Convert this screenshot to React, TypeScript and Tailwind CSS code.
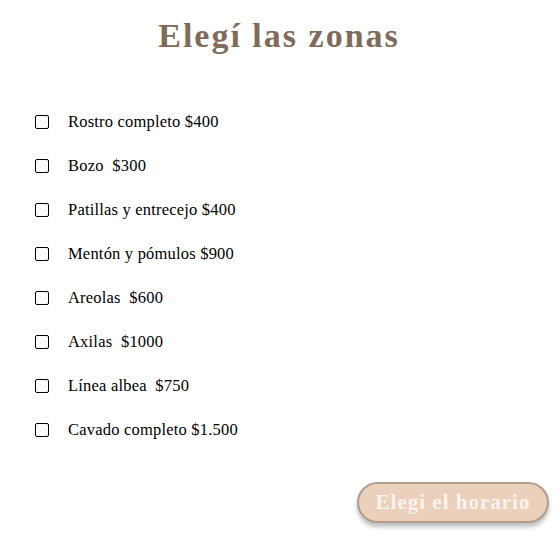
const zonas = [
  "Rostro completo $400",
  "Bozo  $300",
  "Patillas y entrecejo $400",
  "Mentón y pómulos $900",
  "Areolas  $600",
  "Axilas  $1000",
  "Línea albea  $750",
  "Cavado completo $1.500",
];

export default function App() {
  return (
    <div className="w-[558px] h-[540px] bg-white font-['Liberation_Serif',serif] flex flex-col">
      <h1 className="pt-[14px] text-center text-[34px] leading-[44px] tracking-[2px] font-bold text-[#7f6b5b]">
        Elegí las zonas
      </h1>

      <ul className="mt-[42px] pl-[35px] flex flex-col">
        {zonas.map((z) => (
          <li key={z} className="h-[44px] flex items-center">
            <span className="w-[14px] h-[14px] border border-black rounded-[2px] bg-white" />
            <span className="ml-[19px] text-[16.5px] tracking-[0.2px] text-black whitespace-pre">{z}</span>
          </li>
        ))}
      </ul>

      <div className="flex justify-end pr-[9px] mt-[30px]">
        <button className="w-[192px] h-[41px] flex items-center justify-center rounded-full border-2 border-[#b39d8c] bg-[#ebd0bc] text-[#fbf3ec] text-[21px] tracking-[1px] font-bold shadow-[0_4px_4px_rgba(0,0,0,0.25)]">
          Elegi el horario
        </button>
      </div>
    </div>
  );
}
